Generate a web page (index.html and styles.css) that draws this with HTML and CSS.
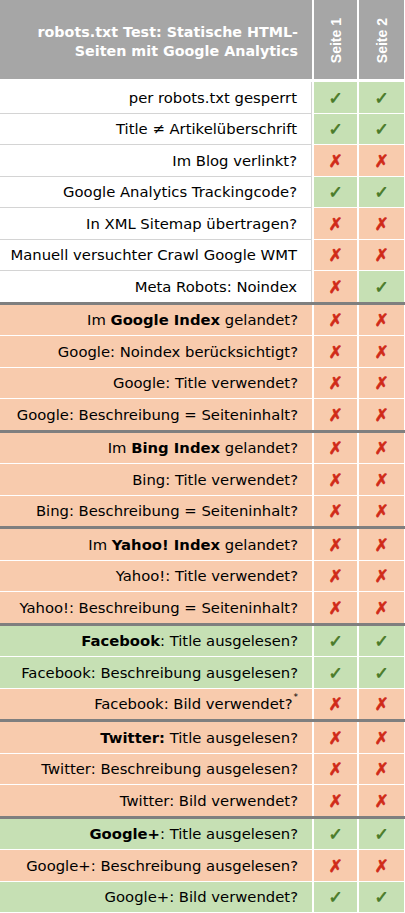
FILE: index.html
```html
<!DOCTYPE html>
<html lang="de">
<head>
<meta charset="utf-8">
<title>robots.txt Test</title>
<link rel="stylesheet" href="styles.css">
</head>
<body>
<div class="sheet">
  <div class="head">
    <div class="title">robots.txt Test: Statische HTML-<br>Seiten mit Google Analytics</div>
    <div class="vert"><span>Seite 1</span></div>
    <div class="vert"><span>Seite 2</span></div>
  </div>

  <div class="row plain"><div class="label">per robots.txt gesperrt</div><div class="mark y">✓</div><div class="mark y">✓</div></div>
  <div class="row plain"><div class="label">Title ≠ Artikelüberschrift</div><div class="mark y">✓</div><div class="mark y">✓</div></div>
  <div class="row plain"><div class="label">Im Blog verlinkt?</div><div class="mark n">✗</div><div class="mark n">✗</div></div>
  <div class="row plain"><div class="label">Google Analytics Trackingcode?</div><div class="mark y">✓</div><div class="mark y">✓</div></div>
  <div class="row plain"><div class="label">In XML Sitemap übertragen?</div><div class="mark n">✗</div><div class="mark n">✗</div></div>
  <div class="row plain"><div class="label">Manuell versuchter Crawl Google WMT</div><div class="mark n">✗</div><div class="mark n">✗</div></div>
  <div class="row plain end"><div class="label">Meta Robots: Noindex</div><div class="mark n">✗</div><div class="mark y">✓</div></div>

  <div class="row orange"><div class="label">Im&nbsp;<b>Google Index</b>&nbsp;gelandet?</div><div class="mark n">✗</div><div class="mark n">✗</div></div>
  <div class="row orange"><div class="label">Google: Noindex berücksichtigt?</div><div class="mark n">✗</div><div class="mark n">✗</div></div>
  <div class="row orange"><div class="label">Google: Title verwendet?</div><div class="mark n">✗</div><div class="mark n">✗</div></div>
  <div class="row orange end"><div class="label">Google: Beschreibung = Seiteninhalt?</div><div class="mark n">✗</div><div class="mark n">✗</div></div>

  <div class="row orange"><div class="label">Im&nbsp;<b>Bing Index</b>&nbsp;gelandet?</div><div class="mark n">✗</div><div class="mark n">✗</div></div>
  <div class="row orange"><div class="label">Bing: Title verwendet?</div><div class="mark n">✗</div><div class="mark n">✗</div></div>
  <div class="row orange end"><div class="label">Bing: Beschreibung = Seiteninhalt?</div><div class="mark n">✗</div><div class="mark n">✗</div></div>

  <div class="row orange"><div class="label">Im&nbsp;<b>Yahoo! Index</b>&nbsp;gelandet?</div><div class="mark n">✗</div><div class="mark n">✗</div></div>
  <div class="row orange"><div class="label">Yahoo!: Title verwendet?</div><div class="mark n">✗</div><div class="mark n">✗</div></div>
  <div class="row orange end"><div class="label">Yahoo!: Beschreibung = Seiteninhalt?</div><div class="mark n">✗</div><div class="mark n">✗</div></div>

  <div class="row green"><div class="label"><b>Facebook</b>: Title ausgelesen?</div><div class="mark y">✓</div><div class="mark y">✓</div></div>
  <div class="row green"><div class="label">Facebook: Beschreibung ausgelesen?</div><div class="mark y">✓</div><div class="mark y">✓</div></div>
  <div class="row orange end"><div class="label">Facebook: Bild verwendet?<sup>*</sup></div><div class="mark n">✗</div><div class="mark n">✗</div></div>

  <div class="row orange"><div class="label"><b>Twitter:</b>&nbsp;Title ausgelesen?</div><div class="mark n">✗</div><div class="mark n">✗</div></div>
  <div class="row orange"><div class="label">Twitter: Beschreibung ausgelesen?</div><div class="mark n">✗</div><div class="mark n">✗</div></div>
  <div class="row orange end"><div class="label">Twitter: Bild verwendet?</div><div class="mark n">✗</div><div class="mark n">✗</div></div>

  <div class="row green"><div class="label"><b>Google+</b>: Title ausgelesen?</div><div class="mark y">✓</div><div class="mark y">✓</div></div>
  <div class="row orange"><div class="label">Google+: Beschreibung ausgelesen?</div><div class="mark n">✗</div><div class="mark n">✗</div></div>
  <div class="row green"><div class="label">Google+: Bild verwendet?</div><div class="mark y">✓</div><div class="mark y">✓</div></div>
</div>
</body>
</html>
```

FILE: styles.css
```css
* { box-sizing: border-box; }

body {
  margin: 0;
  background: #ffffff;
  font-family: "DejaVu Sans", "Liberation Sans", sans-serif;
  color: #000000;
}

.sheet {
  width: 405px;
}

.head {
  display: grid;
  grid-template-columns: 312px 43px 45px;
  column-gap: 2px;
  height: 79px;
  margin-bottom: 3px;
}

.head > div {
  background: #a6a6a6;
  color: #ffffff;
}

.title {
  font-weight: bold;
  font-size: 14.3px;
  line-height: 19px;
  text-align: right;
  padding: 23px 14px 0 0;
}

.vert {
  display: flex;
  justify-content: center;
  align-items: flex-end;
  padding-bottom: 16px;
}

.vert span {
  writing-mode: vertical-rl;
  transform: rotate(180deg);
  font-family: "Liberation Sans", Arial, sans-serif;
  font-weight: bold;
  font-size: 14px;
  line-height: 1;
}

.row {
  display: grid;
  grid-template-columns: 312px 43px 45px;
  column-gap: 2px;
}

.row > div {
  height: 31.5px;
  border-bottom: 1px solid #ffffff;
  display: flex;
  align-items: center;
}

.row.end {
  border-bottom: 3px solid #7f7f7f;
}

.row.end > div {
  height: 30.5px;
  border-bottom: none;
}

.label {
  justify-content: flex-end;
  padding-right: 14px;
  font-size: 14.8px;
  white-space: nowrap;
}

.label b {
  font-weight: bold;
}

.label sup {
  font-size: 9px;
  line-height: 0;
  margin-left: 1px;
  align-self: flex-start;
  margin-top: 8px;
}

.row.plain .label {
  background: #ffffff;
  border-bottom-color: #d4d4d4;
  border-right: 1px solid #d4d4d4;
}

.row.orange .label {
  background: #f8cbad;
}

.row.green .label {
  background: #c6e0b4;
}

.mark {
  justify-content: center;
  font-size: 17px;
  font-weight: bold;
  padding-top: 1px;
}

.mark.y {
  background: #c6e0b4;
  color: #4a7a28;
  -webkit-text-stroke: 0.7px #4a7a28;
}

.mark.n {
  background: #f8cbad;
  color: #d02a18;
  -webkit-text-stroke: 0.7px #d02a18;
}
```
